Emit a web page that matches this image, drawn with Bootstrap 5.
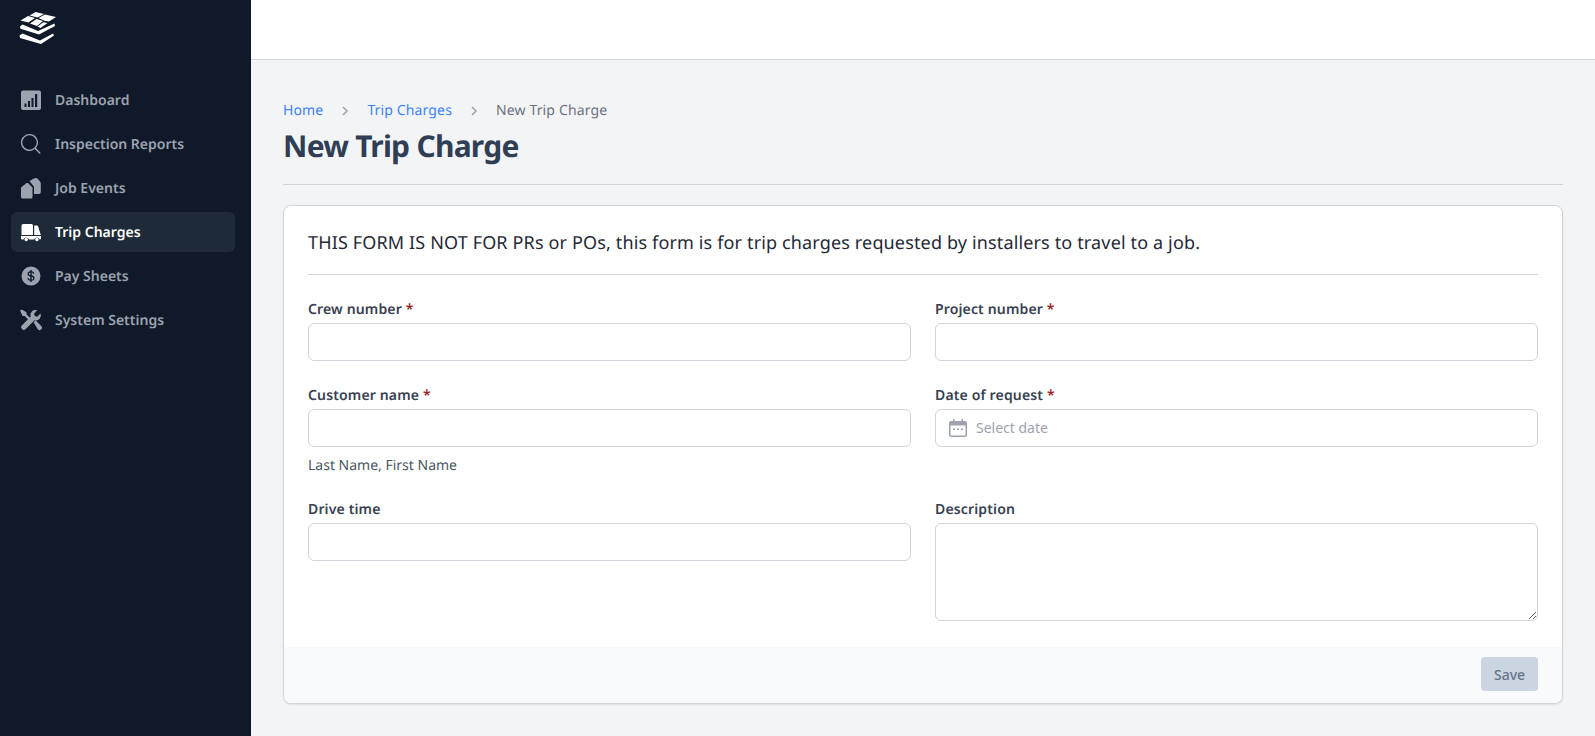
<!DOCTYPE html>
<html lang="en"><head><meta charset="utf-8"><title>New Trip Charge</title>
<link href="https://cdn.jsdelivr.net/npm/bootstrap@5.3.0/dist/css/bootstrap.min.css" rel="stylesheet">
<style>
html,body{height:100%;overflow:hidden}
body{font-family:"Noto Sans",sans-serif;background:#f3f4f6;color:#374151;font-size:14px;text-rendering:geometricPrecision}
.app-shell{height:736px}
.side-bar{width:251px;flex:none;background:#0f1929;padding:0 16px 0 11px}
.logo-box{height:60px;padding:11px 0 0 8px}
.logo-box svg{display:block}
.side-nav{margin-top:20px;gap:4px}
.side-link{height:40px;padding:0 9px;border-radius:6px;color:#9ca3af;font-weight:600;font-size:14px;text-decoration:none;gap:13px}
.side-link svg{width:22px;height:22px;flex:none;fill:#9ca3af}
.side-link.on{background:#1e2a37;color:#fff}
.side-link.on svg{fill:#fff}
.top-strip{height:60px;background:#fff;border-bottom:1px solid #d1d5db;flex:none}
.main-pad{padding:32px 32px 32px}
.crumbs{font-size:14px;line-height:20px;margin:9px 0 0;gap:18px;color:#6b7280;letter-spacing:.14px}
.crumbs a{color:#3b82f6;text-decoration:none}
.crumbs svg{width:10px;height:10px;stroke:#9ca3af;fill:none;stroke-width:1.5;margin:0 -1px}
.page-title{font-size:30px;font-weight:700;line-height:36px;letter-spacing:-.025em;color:#2f3e54;margin:7px 0 0}
.title-rule{border-top:1px solid #d1d5db;margin:20px 0 20px}
.form-card{border:1px solid #d1d5db;border-radius:8px;background:#fff;box-shadow:0 1px 2px rgba(0,0,0,.08);height:499px}
.form-main{padding:25px 24px 0}
.notice{font-size:18px;line-height:24px;color:#1f2937;padding-bottom:19px;border-bottom:1px solid #d1d5db;margin-bottom:24px;letter-spacing:.147px}
.form-grid{display:grid;grid-template-columns:1fr 1fr;column-gap:24px}
.field-label{font-size:14px;font-weight:600;line-height:20px;color:#374151;padding-top:1px;margin-bottom:3px;display:block;letter-spacing:.15px}
.req{color:#991b1b}
.field-input{height:38px;border:1px solid #d1d5db;border-radius:6px;box-shadow:none;font-size:14px;padding:0 12px}
.field-text{height:98px;resize:vertical;border:1px solid #d1d5db;border-radius:6px;font-size:14px}
.field-wrap{margin-bottom:24px}
.field-hint{font-size:14px;line-height:20px;color:#4b5563;margin-top:9px;margin-bottom:-1px}
.date-box{position:relative}
.date-box svg{position:absolute;left:14px;top:10px;width:18px;height:18px;fill:#9ca3af}
.date-box .field-input{padding-left:40px;padding-bottom:2px}
.date-box .field-input::placeholder{color:#9ca3af}
.form-foot{background:#f8fafc;padding:10px 24px 12px;margin-top:auto;border-radius:0 0 8px 8px}
.save-btn{background:#cbd5e1;border:0;color:#64748b;font-size:14px;font-weight:500;height:34px;width:57px;border-radius:4px;padding:0}
</style></head><body>
<div class="d-flex app-shell">
<aside class="side-bar d-flex flex-column">
<div class="logo-box">
<svg width="38" height="34" viewBox="0 0 38 34" fill="#fff"><path d="M1.500 9.500 9 5l7 2-6.500 4.500zM10.500 4.500 16.500 1l8.500 2-6.500 3.500zM11 12.500 17.500 8l6.500 2-6 5zM19.500 7l6.500-3.500L37 6l-7 4.500-4.500-.8zM18.500 15.500 24.500 11.200l4 .8-7 5z"/><path d="M1 15.500 3.500 13.500 19 20 35.500 12.500 36 15 20 23.500 1.500 17.800z"/><path d="M.5 24.500 3.500 22.500 21 29.500 34 22.500 35 24.500 22 33 1 27z"/></svg>
</div>
<nav class="nav flex-column side-nav">
<a class="side-link d-flex align-items-center" href="#"><svg viewBox="0 0 22 22"><path fill-rule="evenodd" d="M3 1.500h16a2 2 0 0 1 2 2V19a2 2 0 0 1-2 2H3a2 2 0 0 1-2-2V3.500a2 2 0 0 1 2-2zM4.500 14.500V18h2v-3.500zM8 12v6h2v-6zM11.500 9v9h2V9zM15 5v13h2.200V5z"/></svg>Dashboard</a>
<a class="side-link d-flex align-items-center" href="#"><svg viewBox="0 0 22 22"><path fill-rule="evenodd" d="M9.500 1a8.500 8.500 0 0 1 6.500 14l4.700 5-1 1-4.800-5A8.500 8.500 0 1 1 9.500 1zm0 1.300a7.200 7.200 0 1 0 0 14.400 7.200 7.200 0 0 0 0-14.400z"/></svg>Inspection Reports</a>
<a class="side-link d-flex align-items-center" href="#"><svg viewBox="0 0 22 22"><path d="M1 10.500 6.500 6H8l4.500 4.500V20a1.500 1.500 0 0 1-1.500 1.500H2.500A1.500 1.500 0 0 1 1 20z"/><path d="M9.500 4 14 1.500Q16 .5 17.500 1.500L20 4.500q.8 1 .8 2V15a2 2 0 0 1-2 2H14V9.800z"/></svg>Job Events</a>
<a class="side-link on d-flex align-items-center" href="#"><svg viewBox="0 0 22 22"><path d="M3 3h8.500A1.500 1.500 0 0 1 13 4.500V14H1.500V4.500A1.500 1.500 0 0 1 3 3zM14.200 4.500H17q.8 0 1.100.8L20.800 14h-6.600z"/><path fill-rule="evenodd" d="M1 15h20v2.500a1 1 0 0 1-1 1h-.3a3 3 0 0 0-5.600 0H9a3 3 0 0 0-5.600 0H2a1 1 0 0 1-1-1z"/><circle cx="6.200" cy="18.500" r="1.700"/><circle cx="16.900" cy="18.500" r="1.700"/></svg>Trip Charges</a>
<a class="side-link d-flex align-items-center" href="#"><svg viewBox="0 0 22 22"><path fill-rule="evenodd" d="M11 1.500a9.500 9.500 0 1 1 0 19 9.500 9.500 0 0 1 0-19zM10.300 5v1.200c-1.700.2-2.800 1.200-2.800 2.700 0 1.600 1.200 2.200 2.800 2.600v2.900c-.9-.1-1.500-.6-1.700-1.400l-1.300.3c.3 1.400 1.400 2.200 3 2.400V17h1.400v-1.300c1.800-.2 2.900-1.200 2.900-2.800 0-1.600-1.200-2.300-2.900-2.700V7.500c.7.1 1.200.5 1.400 1.200l1.300-.3c-.3-1.300-1.300-2-2.700-2.200V5zm0 2.500v2.700c-1-.3-1.500-.6-1.500-1.300 0-.8.6-1.300 1.500-1.400zm1.400 4.400c1.100.3 1.600.6 1.600 1.300 0 .8-.6 1.300-1.600 1.400z"/></svg>Pay Sheets</a>
<a class="side-link d-flex align-items-center" href="#"><svg viewBox="0 0 22 22"><path d="M1.800.5 6.500 3.300v2l5 5-1.800 1.800-5-5h-2L0 1.800z"/><path d="M20.500 4.500l-3.200 3.200-2.600-.6-.6-2.600L17.300 1.300a5 5 0 0 0-6.600 6.200L1.700 16.500a2.700 2.700 0 0 0 3.800 3.800l9-9a5 5 0 0 0 6-6.800z"/><path d="M13.500 13.200l2-2 5.700 5.700a2.400 2.400 0 0 1-3.400 3.400z"/></svg>System Settings</a>
</nav>
</aside>
<div class="flex-grow-1 d-flex flex-column">
<div class="top-strip"></div>
<main class="main-pad">
<nav class="crumbs d-flex align-items-center"><a href="#">Home</a><svg viewBox="0 0 10 10"><path d="M3 1l4 4-4 4"/></svg><a href="#">Trip Charges</a><svg viewBox="0 0 10 10"><path d="M3 1l4 4-4 4"/></svg><span>New Trip Charge</span></nav>
<h1 class="page-title">New Trip Charge</h1>
<div class="title-rule"></div>
<form class="form-card d-flex flex-column">
<div class="form-main">
<p class="notice">THIS FORM IS NOT FOR PRs or POs, this form is for trip charges requested by installers to travel to a job.</p>
<div class="form-grid">
<div class="field-wrap"><label class="field-label">Crew number <span class="req">*</span></label><input class="form-control field-input" type="text"></div>
<div class="field-wrap"><label class="field-label">Project number <span class="req">*</span></label><input class="form-control field-input" type="text"></div>
<div class="field-wrap"><label class="field-label">Customer name <span class="req">*</span></label><input class="form-control field-input" type="text"><div class="field-hint">Last Name, First Name</div></div>
<div class="field-wrap"><label class="field-label">Date of request <span class="req">*</span></label><div class="date-box"><svg viewBox="0 0 18 18"><path fill-rule="evenodd" d="M4 0h1.500v2h7V0H14v2h2a2 2 0 0 1 2 2v12a2 2 0 0 1-2 2H2a2 2 0 0 1-2-2V4a2 2 0 0 1 2-2h2zM1.500 6.500V16c0 .3.2.5.5.5h14c.3 0 .5-.2.5-.5V6.500zM4 9.500h2V11H4zM8 9.500h2V11H8zM12 9.500h2V11h-2z"/></svg><input class="form-control field-input" type="text" placeholder="Select date"></div></div>
<div class="field-wrap mb-0"><label class="field-label">Drive time</label><input class="form-control field-input" type="text"></div>
<div class="field-wrap mb-0"><label class="field-label">Description</label><textarea class="form-control field-text"></textarea></div>
</div>
</div>
<div class="form-foot d-flex justify-content-end"><button type="button" class="btn save-btn">Save</button></div>
</form>
</main>
</div>
</div>
</body></html>
